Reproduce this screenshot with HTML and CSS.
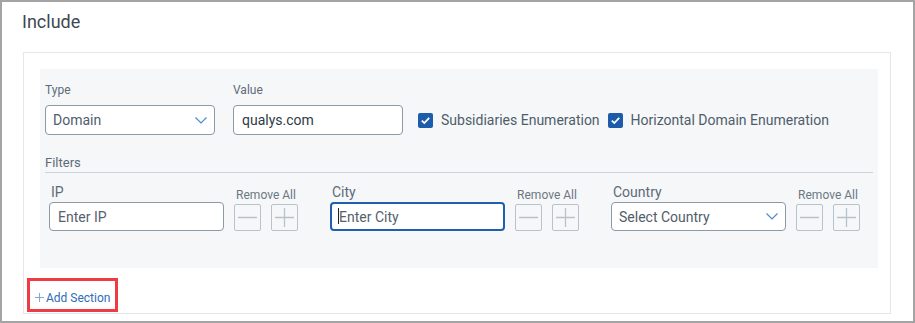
FILE: index.html
```html
<!DOCTYPE html>
<html lang="en">
<head>
  <meta charset="UTF-8">
  <meta name="viewport" content="width=device-width, initial-scale=1.0">
  <title>Include</title>
  <link rel="stylesheet" href="styles.css">
</head>
<body>
  <div class="frame">
    <h2 class="title">Include</h2>

    <div class="panel">
      <div class="section">
        <div class="main-row">
          <div class="field">
            <label class="field-label">Type</label>
            <div class="select type-select">
              <span>Domain</span>
              <svg class="chevron" width="12" height="7" viewBox="0 0 12 7"><polyline points="0.5,0.5 6,6 11.5,0.5" fill="none" stroke="#4f8ad0" stroke-width="1.2"/></svg>
            </div>
          </div>
          <div class="field">
            <label class="field-label">Value</label>
            <input class="text-input value-input" type="text" value="qualys.com">
          </div>
          <label class="check">
            <span class="box"><svg width="15" height="15" viewBox="0 0 15 15"><polyline points="3.8,7.6 6.3,10 11.2,4.8" fill="none" stroke="#fff" stroke-width="1.8"/></svg></span>
            Subsidiaries Enumeration
          </label>
          <label class="check">
            <span class="box"><svg width="15" height="15" viewBox="0 0 15 15"><polyline points="3.8,7.6 6.3,10 11.2,4.8" fill="none" stroke="#fff" stroke-width="1.8"/></svg></span>
            Horizontal Domain Enumeration
          </label>
        </div>

        <div class="filters-label">Filters</div>

        <div class="filters">
          <div class="filter">
            <div class="field">
              <label class="filter-label">IP</label>
              <input class="text-input filter-input" type="text" placeholder="Enter IP">
            </div>
            <div class="actions">
              <span class="remove-all">Remove All</span>
              <div class="btns">
                <button class="icon-btn"><svg width="27" height="27" viewBox="0 0 27 27"><line x1="4" y1="13.5" x2="23" y2="13.5" stroke="#b7c2ca" stroke-width="1.3"/></svg></button>
                <button class="icon-btn"><svg width="27" height="27" viewBox="0 0 27 27"><line x1="4" y1="13.5" x2="23" y2="13.5" stroke="#b7c2ca" stroke-width="1.3"/><line x1="13.5" y1="4" x2="13.5" y2="23" stroke="#b7c2ca" stroke-width="1.3"/></svg></button>
              </div>
            </div>
          </div>

          <div class="filter">
            <div class="field">
              <label class="filter-label">City</label>
              <div class="focus-wrap">
                <input class="text-input filter-input focused" type="text" placeholder="Enter City">
                <span class="caret"></span>
              </div>
            </div>
            <div class="actions">
              <span class="remove-all">Remove All</span>
              <div class="btns">
                <button class="icon-btn"><svg width="27" height="27" viewBox="0 0 27 27"><line x1="4" y1="13.5" x2="23" y2="13.5" stroke="#b7c2ca" stroke-width="1.3"/></svg></button>
                <button class="icon-btn"><svg width="27" height="27" viewBox="0 0 27 27"><line x1="4" y1="13.5" x2="23" y2="13.5" stroke="#b7c2ca" stroke-width="1.3"/><line x1="13.5" y1="4" x2="13.5" y2="23" stroke="#b7c2ca" stroke-width="1.3"/></svg></button>
              </div>
            </div>
          </div>

          <div class="filter">
            <div class="field">
              <label class="filter-label">Country</label>
              <div class="select filter-select">
                <span>Select Country</span>
                <svg class="chevron" width="12" height="7" viewBox="0 0 12 7"><polyline points="0.5,0.5 6,6 11.5,0.5" fill="none" stroke="#4f8ad0" stroke-width="1.2"/></svg>
              </div>
            </div>
            <div class="actions">
              <span class="remove-all">Remove All</span>
              <div class="btns">
                <button class="icon-btn"><svg width="27" height="27" viewBox="0 0 27 27"><line x1="4" y1="13.5" x2="23" y2="13.5" stroke="#b7c2ca" stroke-width="1.3"/></svg></button>
                <button class="icon-btn"><svg width="27" height="27" viewBox="0 0 27 27"><line x1="4" y1="13.5" x2="23" y2="13.5" stroke="#b7c2ca" stroke-width="1.3"/><line x1="13.5" y1="4" x2="13.5" y2="23" stroke="#b7c2ca" stroke-width="1.3"/></svg></button>
              </div>
            </div>
          </div>
        </div>
      </div>

      <a class="add-section" href="#">
        <svg class="plus" width="9" height="9" viewBox="0 0 9 9"><line x1="0" y1="4.5" x2="9" y2="4.5" stroke="#8aa6c8" stroke-width="1"/><line x1="4.5" y1="0" x2="4.5" y2="9" stroke="#8aa6c8" stroke-width="1"/></svg>
        <span>Add Section</span>
      </a>
    </div>
  </div>
</body>
</html>
```

FILE: styles.css
```css
* {
  margin: 0;
  padding: 0;
  box-sizing: border-box;
}

body {
  font-family: Roboto, "Liberation Sans", Arial, sans-serif;
  background: #ffffff;
  color: #4f5d6a;
}

.frame {
  width: 915px;
  height: 323px;
  border: 2px solid #a4a4a4;
  background: #fff;
}

.title {
  font-size: 18px;
  font-weight: 400;
  line-height: 24px;
  color: #3e4852;
  margin: 8px 0 18px 20px;
}

.panel {
  margin: 0 22px 0 21px;
  height: 262px;
  border: 1px solid #e3e8ec;
  padding: 16px 12px 1px 16px;
}

.section {
  background: #f6f7f9;
  height: 199px;
  padding: 13px 5px 0 5px;
}

.main-row {
  display: flex;
  align-items: flex-end;
  gap: 18px;
}

.field {
  display: flex;
  flex-direction: column;
}

.field-label {
  font-size: 12px;
  line-height: 16px;
  color: #5d6b78;
  margin-bottom: 7px;
}

.select {
  height: 30px;
  border: 1px solid #8d99a3;
  border-radius: 4px;
  background: #fff;
  display: flex;
  align-items: center;
  justify-content: space-between;
  padding: 0 7px 0 7px;
  font-size: 14px;
  color: #4f5d6a;
}

.type-select {
  width: 170px;
}

.text-input {
  height: 30px;
  border: 1px solid #8d99a3;
  border-radius: 4px;
  background: #fff;
  padding: 0 8px;
  font-family: inherit;
  font-size: 14px;
  color: #2f3a44;
  outline: none;
}

.text-input::placeholder {
  color: #56616c;
}

.value-input {
  width: 170px;
}

.check {
  display: flex;
  align-items: center;
  gap: 8px;
  height: 30px;
  font-size: 14px;
  color: #4f5d6a;
  white-space: nowrap;
}

.main-row .check:first-of-type {
  margin-left: -3px;
}

.main-row .check + .check {
  margin-left: -10px;
}

.box {
  width: 15px;
  height: 15px;
  border-radius: 2px;
  background: #1c5cab;
  display: flex;
}

.filters-label {
  margin-top: 20px;
  font-size: 13px;
  line-height: 16px;
  padding-bottom: 1px;
  color: #5d6b78;
  border-bottom: 1px solid #ccd4db;
}

.filters {
  display: flex;
  gap: 32px;
  padding: 10px 0 0 4px;
}

.filter {
  display: flex;
  align-items: flex-end;
  gap: 10px;
}

.filter-label {
  font-size: 14px;
  line-height: 19px;
  padding-left: 2px;
  color: #5d6b78;
}

.filter-input,
.filter-select {
  width: 175px;
  height: 29px;
}

.filter-input.focused {
  border: 2px solid #1f5fae;
  padding: 0 7px;
}

.focus-wrap {
  position: relative;
}

.caret {
  position: absolute;
  left: 8px;
  top: 6px;
  width: 1px;
  height: 16px;
  background: #222;
}

.actions {
  display: flex;
  flex-direction: column;
  align-items: center;
}

.remove-all {
  font-size: 12px;
  line-height: 14px;
  color: #6b7883;
  margin-bottom: 2px;
  white-space: nowrap;
}

.btns {
  display: flex;
  gap: 10px;
}

.icon-btn {
  width: 27px;
  height: 27px;
  border: 1px solid #b7c2ca;
  border-radius: 2px;
  background: transparent;
  display: flex;
  align-items: center;
  justify-content: center;
  overflow: hidden;
}

.icon-btn svg {
  flex: none;
}

.add-section {
  margin: 10px 0 0 -13px;
  width: 91px;
  height: 34px;
  border: 3px solid #ef3b43;
  display: flex;
  align-items: flex-end;
  gap: 2px;
  padding: 0 5px 4px 5px;
  font-size: 12px;
  line-height: 14px;
  color: #2d6db8;
  text-decoration: none;
  white-space: nowrap;
}

.plus {
  flex: none;
  margin-bottom: 3px;
}
```
